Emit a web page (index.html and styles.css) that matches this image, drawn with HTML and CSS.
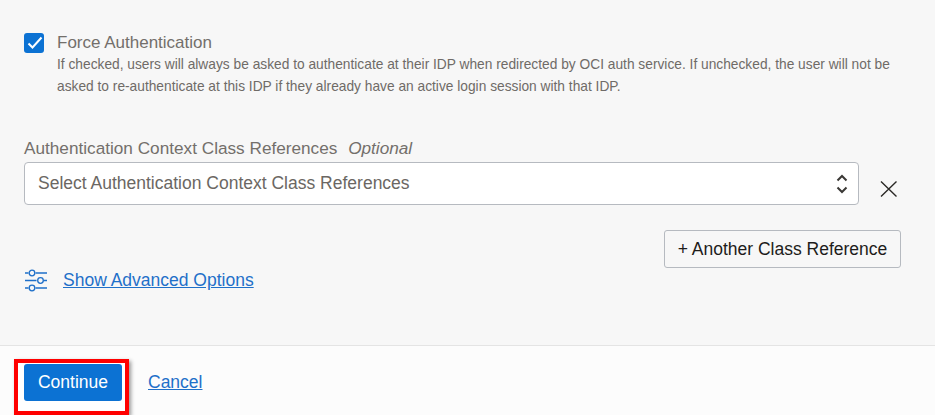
FILE: index.html
```html
<!DOCTYPE html>
<html lang="en">
<head>
<meta charset="utf-8">
<title>Force Authentication</title>
<link rel="stylesheet" href="styles.css">
</head>
<body>
<main class="content">
  <div class="check-row">
    <span class="checkbox">
      <svg width="20" height="20" viewBox="0 0 20 20"><path d="M4.500 10.500l4 4 9-10" fill="none" stroke="#fff" stroke-width="2"/></svg>
    </span>
    <div class="check-text">
      <div class="check-label">Force Authentication</div>
      <p class="check-help">If checked, users will always be asked to authenticate at their IDP when redirected by OCI auth service. If unchecked, the user will not be asked to re-authenticate at this IDP if they already have an active login session with that IDP.</p>
    </div>
  </div>
  <div class="field-label">Authentication Context Class References <em class="optional">Optional</em></div>
  <div class="select-row">
    <div class="select">
      <span>Select Authentication Context Class References</span>
      <svg class="updown" width="12" height="22" viewBox="0 0 12 22"><path d="M1.500 7.500L6 3l4.500 4.500M1.500 14.500L6 19l4.500-4.500" fill="none" stroke="#3a3835" stroke-width="2"/></svg>
    </div>
    <svg class="close" width="18" height="18" viewBox="0 0 18 18"><path d="M1 1.500l15.500 15M16.500 1.500L1 16.500" fill="none" stroke="#2b2926" stroke-width="1.400"/></svg>
  </div>
  <div class="add-row"><button class="add-btn">+ Another Class Reference</button></div>
  <div class="advanced">
    <svg width="24" height="24" viewBox="0 0 24 24" fill="none" stroke="#1f70c9" stroke-width="1.300">
      <path d="M1 5h3.500M11.500 5H23M1 12.500h11.500M19.500 12.500H23M1 20h3.500M11.500 20H23"/>
      <circle cx="8" cy="5" r="2.800"/><circle cx="16.500" cy="12.500" r="2.800"/><circle cx="8" cy="20" r="2.800"/>
    </svg>
    <a href="#" class="link">Show Advanced Options</a>
  </div>
</main>
<footer class="footer">
  <div class="highlight"><button class="primary">Continue</button></div>
  <a href="#" class="link">Cancel</a>
</footer>
</body>
</html>
```

FILE: styles.css
```css
* { box-sizing: border-box; }
html, body { margin: 0; height: 100%; }
body {
  width: 935px;
  height: 415px;
  overflow: hidden;
  background: #f7f7f7;
  font-family: "Liberation Sans", Arial, sans-serif;
  display: flex;
  flex-direction: column;
}
.content { height: 345px; padding: 32px 34px 0 24px; }
.check-row { display: flex; gap: 13px; }
.checkbox {
  width: 20px; height: 20px; margin-top: 1px;
  background: #0c72d3; border-radius: 3px; flex: none;
}
.checkbox svg { display: block; }
.check-label { font-size: 17px; line-height: 21px; color: #736f6b; }
.check-help { margin: 1px 0 0; font-size: 13.750px; line-height: 22px; color: #6f6b67; }
.field-label { margin-top: 40px; font-size: 17.200px; line-height: 20px; color: #736f6b; }
.optional { margin-left: 6px; font-style: italic; }
.select-row { display: flex; align-items: center; margin-top: 4px; }
.select {
  width: 835px; height: 43px;
  display: flex; align-items: center; justify-content: space-between;
  padding: 0 10px 0 13px;
  background: #fff;
  border: 1px solid #b6bac0;
  border-radius: 4px;
  font-size: 17.500px; color: #6b6763;
}
.close { margin-left: 21px; margin-top: 11px; }
.add-row { display: flex; justify-content: flex-end; margin-top: 25px; }
.add-btn {
  width: 237px; height: 38px; padding: 0;
  background: #f7f7f7;
  border: 1px solid #b6bac0;
  border-radius: 3px;
  font: 17.500px "Liberation Sans", Arial, sans-serif;
  color: #1e1c1a;
}
.advanced { display: flex; align-items: center; gap: 15px; height: 24px; }
.link { font-size: 17.500px; color: #1f70c9; text-decoration: underline; }
.footer {
  height: 70px;
  display: flex; align-items: flex-start; gap: 19px;
  padding-left: 14px;
  background: #fcfcfc;
  border-top: 1px solid #e4e4e4;
}
.footer .link { margin-top: 26px; }
.highlight {
  width: 115px; height: 56px;
  margin-top: 13px;
  padding: 1px 0 0 6px;
  border: 4px solid #f00;
  box-shadow: 2px 2px 4px rgba(0,0,0,.4);
  background: #fff;
}
.primary {
  width: 98px; height: 37px; padding: 0;
  background: #0c72d3; color: #fff;
  border: 0; border-radius: 3px;
  font: 17.500px "Liberation Sans", Arial, sans-serif;
}
```
